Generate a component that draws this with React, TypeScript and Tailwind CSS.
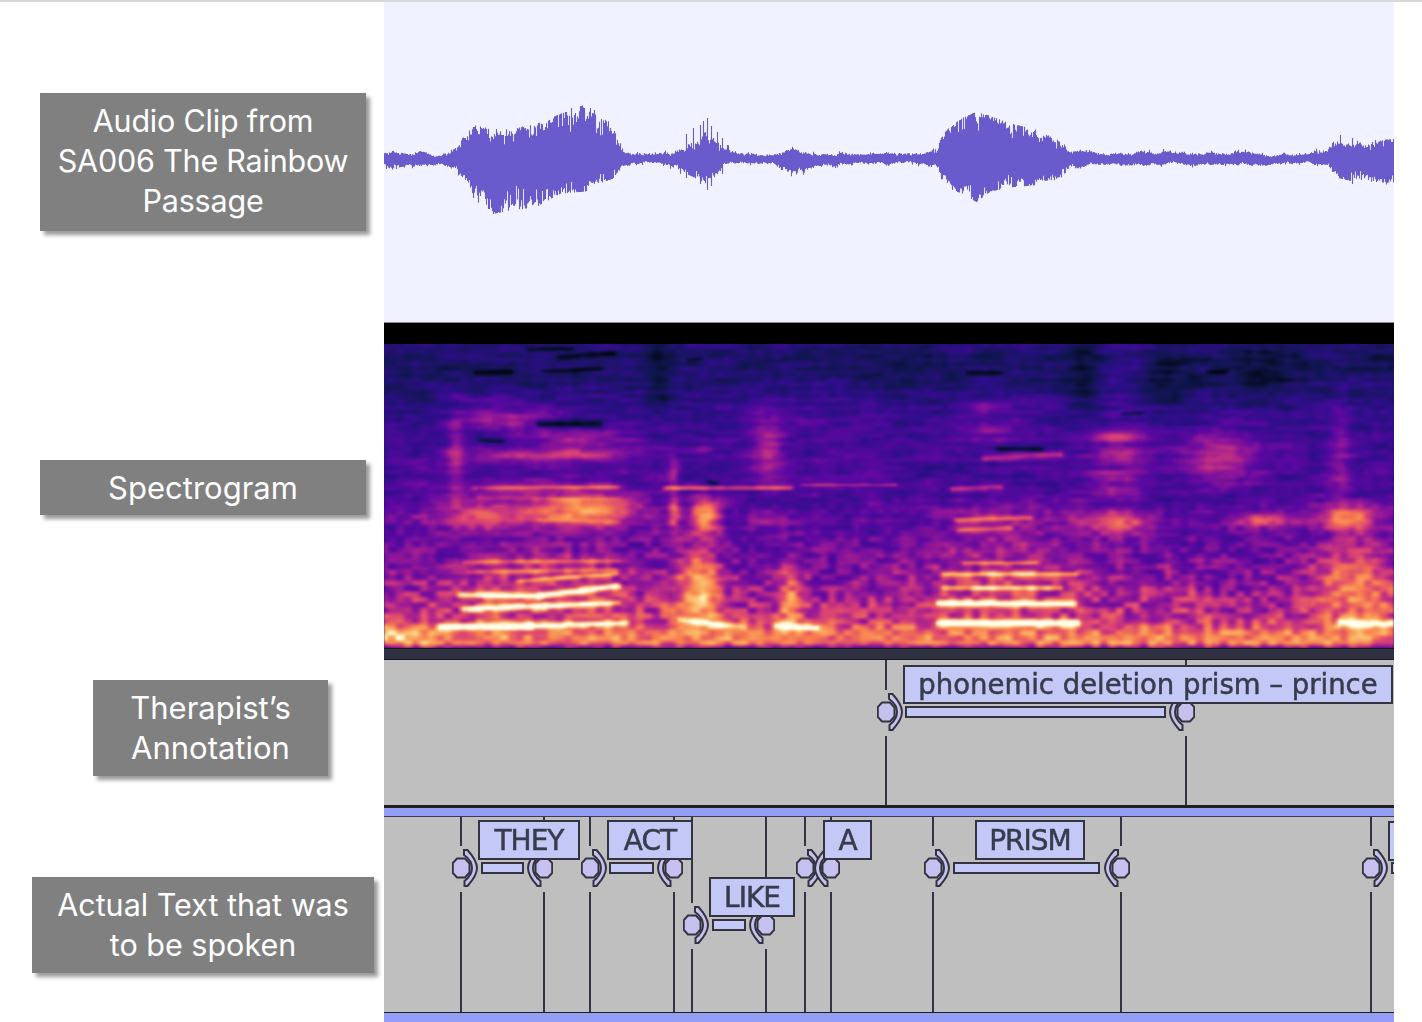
import { useMemo } from 'react';

// seeded so the waveform and spectrogram come out the same every run
function rng(seed: number) {
  let s = seed;
  return () => {
    s = (s + 0x6d2b79f5) | 0;
    let t = Math.imul(s ^ (s >>> 15), 1 | s);
    t = (t + Math.imul(t ^ (t >>> 7), 61 | t)) ^ t;
    return ((t ^ (t >>> 14)) >>> 0) / 4294967296;
  };
}

const envelope: [number, number, number][] = [
  [384, 150, 168], [410, 149, 169], [440, 152, 166], [455, 146, 172], [465, 136, 186], [473, 127, 200], [489, 126, 212],
  [510, 130, 208], [535, 126, 205], [560, 116, 192], [585, 107, 190], [600, 112, 182], [612, 124, 178], [625, 150, 168],
  [635, 153, 165], [675, 150, 168], [688, 142, 174], [705, 130, 182], [715, 140, 178], [730, 150, 168], [760, 153, 165],
  [780, 151, 169], [792, 144, 176], [805, 149, 176], [815, 151, 169], [850, 153, 165], [905, 151, 166], [936, 151, 167],
  [942, 136, 182], [950, 128, 188], [962, 120, 192], [976, 114, 200], [990, 118, 190], [1010, 125, 186], [1035, 131, 184],
  [1060, 142, 178], [1072, 150, 172], [1090, 151, 167], [1300, 152, 166], [1326, 150, 169], [1334, 140, 176], [1350, 142, 180],
  [1394, 140, 184],
];

const spikes: [number, number, number][] = [
  [686, 134, 178], [693, 128, 176], [700, 125, 184], [703, 121, 180], [707, 118, 190], [711, 126, 186], [717, 132, 172], [722, 138, 174],
  [566, 112, 180], [571, 108, 182], [575, 113, 176], [580, 106, 176], [584, 108, 186], [590, 108, 172], [594, 110, 184],
  [1340, 135, 178], [1352, 138, 184],
];

function envAt(x: number) {
  for (let i = 1; i < envelope.length; i++) {
    const [x0, t0, b0] = envelope[i - 1];
    const [x1, t1, b1] = envelope[i];
    if (x <= x1) {
      const k = (x - x0) / (x1 - x0);
      return [t0 + (t1 - t0) * k, b0 + (b1 - b0) * k];
    }
  }
  return [140, 184];
}

function wavePath() {
  const rand = rng(23);
  let d = '';
  let slowT = 0.8;
  let slowB = 0.8;
  for (let x = 384; x < 1394; x += 1) {
    const [top, bottom] = envAt(x);
    const loud = bottom - top > 30;
    slowT += (rand() - 0.5) * 0.22 + (0.8 - slowT) * 0.12;
    slowB += (rand() - 0.5) * 0.22 + (0.8 - slowB) * 0.12;
    let jagT = slowT + (rand() - 0.5) * 0.22;
    let jagB = slowB + (rand() - 0.5) * 0.22;
    if (loud) {
      jagT = Math.max(0.62, Math.min(1.05, jagT + 0.1));
      jagB = Math.max(0.62, Math.min(1.05, jagB + 0.1));
      if (rand() < 0.09) jagT *= 0.72;
      if (rand() < 0.09) jagB *= 0.72;
    } else {
      jagT = Math.max(0.3, Math.min(1.3, jagT - 0.1));
      jagB = Math.max(0.3, Math.min(1.3, jagB - 0.1));
      if (rand() < 0.06) jagT *= 1.35;
      if (rand() < 0.06) jagB *= 1.35;
    }
    const up = 159 - (159 - top) * jagT;
    const down = 159 + (bottom - 159) * jagB;
    d += `M${x - 384 + 0.5} ${up.toFixed(1)}V${down.toFixed(1)}`;
  }
  for (const [x, top, bottom] of spikes) d += `M${x - 384 + 0.5} ${top}V${bottom}`;
  return d;
}

// blobs: cx, cy, sx, sy, amount
const blobs: [number, number, number, number, number][] = [
  [890, 347, 900, 4, 0.06],
  [505, 418, 32, 8, 0.22], [480, 398, 25, 4, 0.1], [456, 455, 6, 30, 0.2], [585, 437, 34, 7, 0.2], [548, 455, 58, 5, 0.26],
  [545, 508, 74, 14, 0.17], [590, 511, 28, 12, 0.28], [480, 518, 26, 6, 0.16], [705, 515, 10, 13, 0.44], [674, 510, 4, 15, 0.28],
  [674, 470, 4, 8, 0.2], [767, 450, 11, 25, 0.22], [705, 450, 8, 3, 0.18], [770, 520, 16, 5, 0.16],
  [700, 588, 16, 28, 0.38], [790, 596, 9, 24, 0.28], [540, 590, 78, 24, 0.12],
  [990, 407, 24, 6, 0.17], [990, 430, 28, 9, 0.17], [1117, 437, 23, 5, 0.26], [1117, 455, 21, 6, 0.26], [1117, 475, 19, 5, 0.22],
  [1117, 492, 21, 4, 0.22], [1116, 522, 25, 8, 0.32], [1217, 457, 26, 18, 0.25], [1267, 520, 25, 6, 0.28], [1350, 517, 21, 10, 0.36],
  [1340, 455, 8, 35, 0.15], [1356, 582, 28, 28, 0.3], [1175, 594, 24, 4, 0.12], [1005, 520, 44, 16, 0.14],
  [1005, 580, 72, 26, 0.12], [400, 636, 24, 6, 0.22], [535, 500, 84, 44, 0.07],
  [660, 370, 11, 36, -0.11], [1085, 372, 13, 42, -0.13], [1165, 375, 22, 26, -0.1], [1270, 368, 32, 24, -0.11], [860, 360, 60, 22, -0.07],
  [1380, 362, 20, 12, -0.06], [410, 385, 40, 26, -0.04],
  [820, 400, 40, 70, 0.05], [1120, 380, 20, 35, 0.09], [650, 430, 300, 40, 0.03], [1250, 450, 160, 45, 0.03],
];

// streaks: x1, y1, x2, y2, half thickness, amount
const streaks: [number, number, number, number, number, number][] = [
  [461, 595, 540, 596, 2, 0.54], [540, 596, 617, 586, 2.2, 0.62], [464, 609, 545, 606, 2.1, 0.54], [545, 606, 617, 603, 1.9, 0.42],
  [440, 627, 530, 626, 2.3, 0.58], [530, 626, 625, 623, 2, 0.5], [470, 572, 615, 570, 1.5, 0.2], [520, 581, 615, 574, 1.5, 0.28],
  [465, 562, 617, 561, 1.5, 0.22], [475, 488, 617, 487, 1.4, 0.24], [480, 498, 617, 499, 1.3, 0.1], [540, 520, 617, 522, 1.3, 0.1],
  [667, 488, 790, 488, 1.2, 0.36], [804, 485, 894, 485, 1.1, 0.2],
  [777, 626, 817, 628, 2.4, 0.36], [680, 620, 744, 627, 2.4, 0.34],
  [940, 603, 1073, 604, 2.3, 0.62], [940, 623, 1077, 623, 2.4, 0.64], [945, 574, 1075, 574, 1.6, 0.36], [945, 588, 1060, 588, 1.6, 0.36],
  [965, 563, 1035, 563, 1.4, 0.26], [957, 520, 1030, 518, 1.6, 0.26], [960, 530, 1010, 528, 1.6, 0.24], [953, 489, 1000, 487, 1.8, 0.26],
  [985, 458, 1060, 454, 2.4, 0.26], [1340, 622, 1394, 624, 2.8, 0.5],
  [530, 350, 570, 349, 1.4, -0.2], [560, 357, 612, 354, 1.6, -0.22], [478, 373, 510, 372, 1.6, -0.26], [545, 371, 600, 369, 1.3, -0.2],
  [540, 424, 600, 424, 2.2, -0.32], [480, 440, 500, 441, 1.6, -0.26], [690, 360, 700, 359, 1.4, -0.16], [710, 482, 716, 483, 1.6, -0.24],
  [1000, 449, 1040, 449, 1.6, -0.3], [970, 373, 1000, 373, 1.6, -0.22], [1210, 372, 1225, 372, 1.4, -0.22], [1125, 414, 1140, 413, 1.4, -0.22],
];

const stops: [number, number, number, number][] = [
  [0, 4, 6, 22], [0.12, 16, 22, 80], [0.24, 44, 14, 136], [0.36, 90, 8, 160], [0.48, 150, 24, 150], [0.6, 214, 62, 118],
  [0.72, 246, 120, 80], [0.84, 250, 176, 96], [0.94, 252, 232, 170], [1, 255, 255, 236],
];

function colour(v: number) {
  for (let i = 1; i < stops.length; i++) {
    if (v <= stops[i][0]) {
      const a = stops[i - 1];
      const b = stops[i];
      const k = (v - a[0]) / (b[0] - a[0]);
      return `rgb(${Math.round(a[1] + (b[1] - a[1]) * k)},${Math.round(a[2] + (b[2] - a[2]) * k)},${Math.round(a[3] + (b[3] - a[3]) * k)})`;
    }
  }
  return 'rgb(255,255,236)';
}

const baseRamp: [number, number][] = [
  [344, 0.16], [380, 0.18], [420, 0.24], [490, 0.29], [540, 0.37], [590, 0.46], [620, 0.56], [634, 0.72], [643, 0.72], [648, 0.46],
];

function baseAt(y: number) {
  for (let i = 1; i < baseRamp.length; i++) {
    if (y <= baseRamp[i][0]) {
      const k = (y - baseRamp[i - 1][0]) / (baseRamp[i][0] - baseRamp[i - 1][0]);
      return baseRamp[i - 1][1] + (baseRamp[i][1] - baseRamp[i - 1][1]) * k;
    }
  }
  return 0.4;
}

function spectrogramPaths() {
  const CW = 3;
  const CH = 2;
  const cols = Math.ceil(1010 / CW);
  const rows = Math.ceil(304 / CH);
  const LEVELS = 48;
  const rand = rng(7);
  const gridW = 220;
  const gridH = 110;
  const fine = Array.from({ length: gridW * gridH }, () => rand() - 0.5);
  const streak = Array.from({ length: gridW * gridH }, () => rand() - 0.5);
  const sample = (g: number[], u: number, v: number) => {
    const x0 = Math.floor(u);
    const y0 = Math.floor(v);
    const fx = u - x0;
    const fy = v - y0;
    const sx = fx * fx * (3 - 2 * fx);
    const sy = fy * fy * (3 - 2 * fy);
    const at = (a: number, b: number) => g[(b % gridH) * gridW + (a % gridW)];
    return (at(x0, y0) * (1 - sx) + at(x0 + 1, y0) * sx) * (1 - sy) + (at(x0, y0 + 1) * (1 - sx) + at(x0 + 1, y0 + 1) * sx) * sy;
  };
  const buckets: string[] = Array.from({ length: LEVELS }, () => '');
  for (let r = 0; r < rows; r++) {
    const y = 344 + r * CH + 1;
    let runLevel = -1;
    let runStart = 0;
    for (let c = 0; c <= cols; c++) {
      let level = -2;
      if (c < cols) {
        const x = 384 + c * CW + 1.5;
        let v = baseAt(y);
        for (const [cx, cy, sx, sy, a] of blobs) {
          const dx = (x - cx) / sx;
          const dy = (y - cy) / sy;
          const e = dx * dx + dy * dy;
          if (e < 12) v += a * Math.exp(-e / 2);
        }
        for (const [x1, y1, x2, y2, t, a] of streaks) {
          if (x < x1 - 8 || x > x2 + 8) continue;
          const k = Math.min(1, Math.max(0, (x - x1) / (x2 - x1)));
          const ly = y1 + (y2 - y1) * k;
          const dy = (y - ly) / t;
          const over = x < x1 ? x1 - x : x > x2 ? x - x2 : 0;
          v += a * Math.exp(-dy * dy / 2) * Math.exp(-over * over / 14);
        }
        const low = Math.min(1, Math.max(0, (y - 480) / 130));
        v += sample(fine, x / 8, y / 5.5) * (0.08 + 0.22 * low);
        v += sample(streak, x / 30, y / 4) * (0.12 - 0.08 * low);
        level = Math.max(0, Math.min(LEVELS - 1, Math.round(v * (LEVELS - 1))));
      }
      if (level !== runLevel) {
        if (runLevel >= 0) buckets[runLevel] += `M${runStart * CW} ${r * CH}h${(c - runStart) * CW}v${CH}h-${(c - runStart) * CW}z`;
        runLevel = level;
        runStart = c;
      }
    }
  }
  return buckets.map((d, i) => ({ d, fill: colour(i / (LEVELS - 1)) }));
}

function Waveform() {
  const d = useMemo(wavePath, []);
  return (
    <div className="h-[320px] shrink-0 bg-[#f0f2ff]">
      <svg width={1010} height={320} viewBox="0 2 1010 320" className="block blur-[0.45px]">
        <path d={d} stroke="#6a5bcd" strokeWidth={1.1} fill="none" />
      </svg>
    </div>
  );
}

function Spectrogram() {
  const paths = useMemo(spectrogramPaths, []);
  return (
    <div className="h-[304px] shrink-0 overflow-hidden bg-[#2a1070]">
      <svg width={1010} height={304} viewBox="0 0 1010 304" shapeRendering="crispEdges" className="block blur-[1.3px]">
        {paths.map((p) => (p.d ? <path key={p.fill} d={p.d} fill={p.fill} /> : null))}
      </svg>
    </div>
  );
}

function Handle({ x, y, flip }: { x: number; y: number; flip?: boolean }) {
  return (
    <svg
      width={28}
      height={40}
      viewBox="0 0 28 40"
      className="absolute blur-[0.4px]"
      style={{ left: flip ? x - 19 : x - 9, top: y - 20, transform: flip ? 'scaleX(-1)' : undefined }}
    >
      <path d="M5 10.5 13 10.5 17.5 15.5V24.5L13 29.5H5L0.8 25V15Z" fill="#c6c2f0" stroke="#33343f" strokeWidth={2} />
      <path
        d="M12 2H15.5C20 7 25 13.5 25 20C25 26.5 20 33 15.5 38H12.5V33C16.5 30 20 25 20 20C20 15 16.5 10 12 7Z"
        fill="#c6c2f0"
        stroke="#33343f"
        strokeWidth={2}
      />
    </svg>
  );
}

function Boundary({ x, y, hBottom, flip }: { x: number; y: number; hBottom: number; flip?: boolean }) {
  return (
    <>
      <div className="absolute top-0 w-[2px] bg-[#33343f] blur-[0.3px]" style={{ left: x - 1, height: y - 22 }} />
      <div className="absolute w-[2px] bg-[#33343f] blur-[0.3px]" style={{ left: x - 1, top: y + 24, height: hBottom - y - 24 }} />
      <Handle x={x} y={y} flip={flip} />
    </>
  );
}

type Word = { text: string; left: number; right: number; boxL: number; boxR: number; barL: number; barR: number; y: number };

function Interval({ w }: { w: Word }) {
  return (
    <>
      <div
        className="absolute flex h-[40px] items-center justify-center overflow-hidden border-2 border-[#33343f] bg-[#c3c8f6]"
        style={{ left: w.boxL, width: w.boxR - w.boxL, top: w.y - 48 }}
      >
        <span className="mt-[2px] whitespace-nowrap font-['DejaVu_Sans',sans-serif] text-[28px] tracking-[-1px] text-[#383b4c] blur-[0.45px] [-webkit-text-stroke:0.5px_#383b4c]">
          {w.text}
        </span>
      </div>
      {w.barR > w.barL ? (
        <div
          className="absolute h-[12px] border-2 border-[#33343f] bg-[#c3c8f6]"
          style={{ left: w.barL, width: w.barR - w.barL, top: w.y - 6 }}
        />
      ) : null}
    </>
  );
}

// offsets below are relative to each tier's own left/top corner
const X = 384;
const T2 = 817;
const words: Word[] = [
  { text: 'THEY', left: 461, right: 544, boxL: 478, boxR: 580, barL: 481, barR: 524, y: 868 },
  { text: 'ACT', left: 590, right: 674, boxL: 607, boxR: 693, barL: 609, barR: 654, y: 868 },
  { text: 'LIKE', left: 692, right: 766, boxL: 709, boxR: 795, barL: 712, barR: 746, y: 925 },
  { text: 'A', left: 805, right: 831, boxL: 823, boxR: 872, barL: 0, barR: 0, y: 868 },
  { text: 'PRISM', left: 933, right: 1121, boxL: 975, boxR: 1085, barL: 953, barR: 1100, y: 868 },
];

function WordsTier() {
  return (
    <div className="relative h-[195px] shrink-0 overflow-hidden bg-[#bfbfbf]">
      {words.map((w) => (
        <div key={w.text}>
          <Boundary x={w.left - X} y={w.y - T2} hBottom={195} />
          <Boundary x={w.right - X} y={w.y - T2} hBottom={195} flip />
        </div>
      ))}
      {words.map((w) => (
        <Interval
          key={w.text}
          w={{ ...w, boxL: w.boxL - X, boxR: w.boxR - X, barL: w.barL ? w.barL - X : 0, barR: w.barR ? w.barR - X : 0, y: w.y - T2 }}
        />
      ))}
      <Boundary x={1371 - X} y={868 - T2} hBottom={195} />
      <div className="absolute top-[4px] left-[1004px] h-[40px] w-[20px] border-2 border-[#33343f] bg-[#c3c8f6]" />
      <div className="absolute top-[45px] left-[1007px] h-[12px] w-[20px] border-2 border-[#33343f] bg-[#c3c8f6]" />
    </div>
  );
}

function AnnotationTier() {
  return (
    <div className="relative h-[145px] shrink-0 overflow-hidden bg-[#bfbfbf]">
      <Boundary x={886 - X} y={712 - 660} hBottom={145} />
      <Boundary x={1186 - X} y={712 - 660} hBottom={145} flip />
      <div className="absolute top-[5px] left-[519px] flex h-[39px] w-[490px] items-center justify-center border-2 border-[#33343f] bg-[#c3c8f6]">
        <span className="whitespace-nowrap font-['DejaVu_Sans',sans-serif] text-[27.5px] text-[#383b4c] blur-[0.45px] [-webkit-text-stroke:0.5px_#383b4c]">
          phonemic deletion prism – prince
        </span>
      </div>
      <div className="absolute top-[46px] left-[521px] h-[12px] w-[261px] border-2 border-[#33343f] bg-[#c3c8f6]" />
    </div>
  );
}

function Label({ lines, className }: { lines: string[]; className: string }) {
  return (
    <div
      className={`flex flex-col items-center justify-center bg-[#808080] text-center font-['Inter',sans-serif] leading-[40px] text-white shadow-[4px_4px_4px_rgba(0,0,0,0.4)] ${className}`}
    >
      {lines.map((line) => (
        <span key={line} className="whitespace-nowrap">
          {line}
        </span>
      ))}
    </div>
  );
}

export default function App() {
  return (
    <div className="h-[1022px] w-[1422px] overflow-hidden bg-white">
      <div className="h-[2px] bg-[#d9d9d9]" />
      <div className="flex">
        <aside className="w-[384px] shrink-0 pt-[91px]">
          <Label lines={['Audio Clip from', 'SA006 The Rainbow', 'Passage']} className="ml-[40px] h-[138px] w-[326px] pb-[2px] text-[30.5px] tracking-[-0.2px]" />
          <Label lines={['Spectrogram']} className="mt-[229px] ml-[40px] h-[55px] w-[326px] text-[31px]" />
          <Label lines={['Therapist’s', 'Annotation']} className="mt-[165px] ml-[93px] h-[96px] w-[235px] text-[31px]" />
          <Label lines={['Actual Text that was', 'to be spoken']} className="mt-[101px] ml-[32px] h-[96px] w-[342px] text-[30.5px]" />
        </aside>
        <main className="flex w-[1010px] shrink-0 flex-col">
          <Waveform />
          <div className="h-[22px] shrink-0 border-t border-[#8a8a92] bg-black" />
          <Spectrogram />
          <div className="h-[12px] shrink-0 border-y border-[#15151f] bg-[#2f3142]" />
          <AnnotationTier />
          <div className="h-[3px] shrink-0 bg-[#1f1f24]" />
          <div className="h-[9px] shrink-0 border-b border-[#3a3c55] bg-[#959df5]" />
          <WordsTier />
          <div className="h-[1px] shrink-0 bg-[#1f1f24]" />
          <div className="h-[10px] shrink-0 bg-[#959df5]" />
        </main>
      </div>
    </div>
  );
}
